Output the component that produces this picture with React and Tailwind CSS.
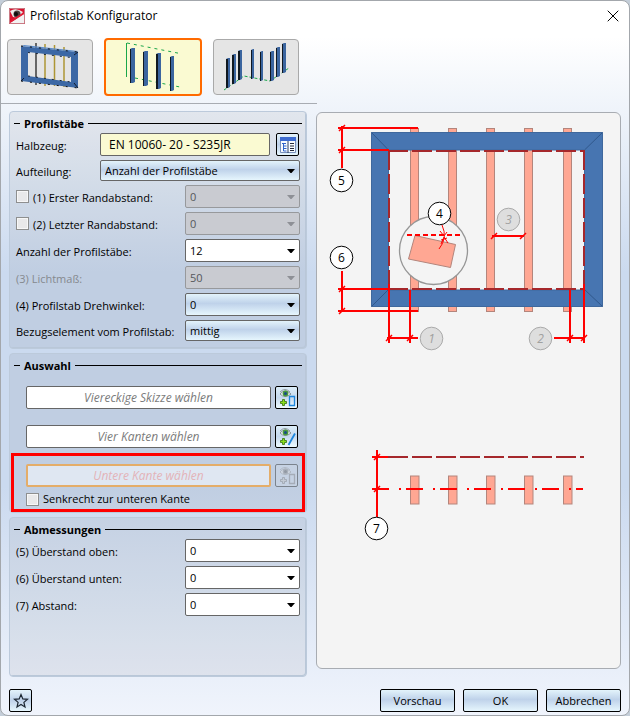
import React, { useState } from 'react';
import clsx from 'clsx';
import { X } from 'lucide-react';

const GLOSSY = 'bg-linear-to-b from-[#e3f3fb] via-[#bfd2ea] via-45% to-[#e6f6fd]';

const Select = ({ id, options, variant = 'plain', disabled, className }) => {
  const [value, setValue] = useState(options[0]);

  return (
    <div className={clsx('relative', className)}>
      <select
        id={id}
        value={value}
        disabled={disabled}
        onChange={(e) => setValue(e.target.value)}
        className={clsx(
          'block h-full w-full appearance-none rounded-xs border pr-5 pl-1 leading-4',
          disabled && 'border-[#97999c] bg-[#c9cbd1] text-[#55575b]',
          !disabled && 'border-[#666666] text-black',
          !disabled && (variant === 'glossy' ? GLOSSY : 'bg-white')
        )}
      >
        {options.map((option) => (
          <option key={option}>{option}</option>
        ))}
      </select>
      <svg
        viewBox="0 0 8 4"
        className={clsx(
          'pointer-events-none absolute top-1/2 right-[5px] h-1 w-2 -translate-y-1/2',
          disabled ? 'fill-[#8e9096]' : 'fill-black'
        )}
      >
        <path d="M0 0h8L4.500 4h-1z" />
      </svg>
    </div>
  );
};

const Checkbox = ({ id }) => (
  <input
    id={id}
    type="checkbox"
    className="size-[13px] shrink-0 appearance-none border border-[#8e8f8f] bg-[#e9e9ea] shadow-[inset_0_0_0_1px_#f7f7f7] checked:bg-[#3c6fb5]"
  />
);

const Group = ({ title, className, children }) => (
  <section className={clsx('rounded-sm border border-[#bccadb] bg-black/5 px-1.5 shadow-[inset_-1px_-1px_0_#b9c7d8]', className)}>
    <h2 className="-mx-0.5 flex h-[21px] items-center gap-1 pt-0.5 font-bold">
      <span className="h-px w-1.5 bg-black" />
      <span className="leading-4">{title}</span>
      <span className="h-px flex-1 bg-black" />
    </h2>
    {children}
  </section>
);

const Row = ({ id, label, checkbox, muted, height = 'h-[23px]', ...select }) => (
  <div className={clsx('flex items-center justify-between', height)}>
    <div className="flex items-center gap-1">
      {checkbox && <Checkbox id={`${id}-on`} />}
      <label htmlFor={id} className={clsx('pt-0.5 whitespace-nowrap', muted && 'text-[#85898e]')}>
        {label}
      </label>
    </div>
    <Select id={id} className="h-full w-[115px] shrink-0" {...select} />
  </div>
);

const PickIcon = ({ shape, disabled }) => (
  <svg viewBox="0 0 20 20" className={clsx('size-5', disabled && 'opacity-40 grayscale')}>
    <path d="M3 6Q8 0 14 6Q8 11 3 6Z" fill="#f4f8fa" stroke="#6f7778" strokeWidth=".8" />
    <path d="M3 4Q8-1 13 4" fill="none" stroke="#7d8486" strokeWidth=".8" />
    <circle cx="8.500" cy="5.500" r="2.900" fill="#4a9a3c" />
    <circle cx="8.500" cy="5.500" r="1.500" fill="#184b88" />
    <path d="M5.500 11.500h2v2h2v2h-2v2h-2v-2h-2v-2h2z" fill="#8be01c" stroke="#34720d" strokeWidth=".8" />
    {shape === 'rect' ? (
      <path d="M12.500 8.500h5v9h-5z" fill="none" stroke="#1e86dd" strokeWidth="1.300" />
    ) : (
      <path d="M18 6.500L11.500 18" stroke="#1e86dd" strokeWidth="1.800" />
    )}
  </svg>
);

const PickField = ({ text, shape, disabled }) => (
  <div className="flex h-[23px] gap-1 pr-0.5 pl-2.5">
    <input
      aria-label={text}
      placeholder={text}
      disabled={disabled}
      readOnly
      className={clsx(
        'min-w-0 flex-1 rounded-xs text-center text-xs italic',
        disabled
          ? 'border-2 border-[#e4ad69] bg-[#dfe7f2] placeholder:text-[#e3b3b8]'
          : 'border border-[#666666] bg-white placeholder:text-[#7b7b7b]'
      )}
    />
    <button
      aria-label={text}
      disabled={disabled}
      className={clsx(
        'flex size-[23px] items-center justify-center rounded-xs border',
        disabled ? 'border-[#7b838d] bg-[#c6d2e3]' : 'border-black bg-linear-to-b from-[#dcedf8] via-[#c5d8ed] to-[#eefaff]'
      )}
    >
      <PickIcon shape={shape} disabled={disabled} />
    </button>
  </div>
);

const AppIcon = () => (
  <svg viewBox="0 0 16 16" className="size-4">
    <path fill="#d9112e" d="M0 0h16v16H0z" />
    <path fill="#f2f2f2" d="M1 15L15 6v9z" />
    <path fill="#ece9e9" d="M1 3q6-4 13 1l-4 6-6-1z" />
    <circle cx="8" cy="6" r="3.500" fill="#4a3c3c" />
    <circle cx="7" cy="6" r="2" fill="#0d0d0d" />
    <path d="M1 14L15 5" stroke="#e11b35" strokeWidth="1.500" />
    <path d="M.5.5h15v15H.5z" fill="none" stroke="#c3a9ab" strokeWidth=".7" />
  </svg>
);

const FrameIcon = () => (
  <svg viewBox="7 39 86 56" className="h-14 w-[86px]">
    <path d="M36 43v42" stroke="#111" strokeWidth="1.200" />
    <path d="M45 44v42M54.500 45v41M64 47v40" stroke="#ad9634" strokeWidth="1.500" />
    <path d="M21 46L78 52V88L21 81Z M28 52V76L71 82V57Z" fill="#3c68a5" fillRule="evenodd" />
    <path d="M22 46l2-1 54 6-1 1z" fill="#5d8cc9" />
    <path d="M28 52.500l43 5M28 76l43 6" stroke="#16243a" strokeDasharray="2 6" />
    <path d="M21 46l57 6M21 81l57 7" stroke="#111" strokeDasharray="2 7" />
    <path d="M74 55l4-3M21 81l3-3M74 83l4 5" stroke="#111a2b" />
  </svg>
);

const Post = ({ x, y, w = 4, h, dark = 1 }) => (
  <g>
    <path d={`M${x} ${y + 1}l2-1h${w - 2}v${h - 1}l-2 1h${2 - w}z`} fill="#3b659f" />
    <path d={`M${x + dark / 2} ${y + 1}v${h - 1}`} stroke="#101820" strokeWidth={dark} />
  </g>
);

const RowIcon = () => (
  <svg viewBox="105 39 96 56" className="h-14 w-24">
    <path d="M126.500 77V43" stroke="#1aa64a" />
    <path d="M127 43l53 10.500" stroke="#1aa64a" strokeDasharray="3 4" />
    <path d="M135 78l45 9" stroke="#1aa64a" strokeDasharray="3 4" />
    <Post x={130} y={48} w={5} h={35} />
    <Post x={143} y={51} w={5} h={35} />
    <Post x={156} y={53} w={5} h={36} dark={2} />
    <Post x={170} y={56} h={35} />
  </svg>
);

const PathIcon = () => (
  <svg viewBox="213 39 86 56" className="h-14 w-[86px]">
    <path d="M224 90l20-14 26 5 19-13" fill="none" stroke="#1aa64a" strokeDasharray="3 2" />
    <Post x={226} y={58} h={30} dark={2} />
    <Post x={232} y={54} h={30} dark={2} />
    <Post x={238} y={50} h={30} dark={2} />
    <Post x={251} y={49} w={3} h={30} />
    <Post x={260} y={51} w={3} h={30} />
    <Post x={270} y={51} h={30} />
    <Post x={276} y={47} h={30} />
    <Post x={282} y={43} h={30} />
  </svg>
);

const MODES = [
  { id: 'frame', label: 'Rahmen', Icon: FrameIcon },
  { id: 'row', label: 'Kante', Icon: RowIcon },
  { id: 'path', label: 'Pfad', Icon: PathIcon },
];

const Badge = ({ x, y, n, muted }) => (
  <g>
    <circle cx={x} cy={y} r="11.300" fill={muted ? '#dedede' : '#fff'} stroke={muted ? '#a9a9a9' : '#000'} />
    <text
      x={x}
      y={y + 4.5}
      textAnchor="middle"
      fontSize="12"
      fontStyle={muted ? 'italic' : 'normal'}
      fill={muted ? '#a0a0a0' : '#000'}
    >
      {n}
    </text>
  </g>
);

const BARS = [410, 448, 486, 524, 563];

const Preview = () => (
  <svg viewBox="317 113 303 555" preserveAspectRatio="xMidYMin meet" className="block h-auto w-full">
    {/* bars and frame */}
    {BARS.map((x) => (
      <rect key={x} x={x + 0.5} y="128.500" width="8" height="183" fill="#ffa793" stroke="#b3857c" />
    ))}
    <path d="M371.500 132.500h231v174h-231z M388.500 150v140h196V150z" fill="#4775b1" stroke="#3f689d" fillRule="evenodd" />
    <path d="M371.500 132.500l17 17.500M602.500 132.500l-18 17.500M371.500 306.500l17-17M602.500 306.500l-18-17" stroke="#30588c" />
    <g fill="none" stroke="#a5272b" strokeWidth="2" strokeDasharray="20 4">
      <path d="M388 151h196M388 289h196M389 150v140M584 150v140" />
      <path d="M388 457h196" />
    </g>

    {/* rotation detail */}
    <circle cx="433.500" cy="250.500" r="34" fill="#f4f4f4" stroke="#969696" strokeWidth="1.300" />
    <path d="M415 235.500l40.500 9-5 23-42-8.500z" fill="#ffa793" stroke="#b3857c" />
    <path d="M407 235h56" stroke="red" strokeWidth="2" strokeDasharray="5 3" />
    <path d="M442 225Q448 238 439 249M440 231l4 5 3-4M441 244l3-7 4 6M441 240l6-2" fill="none" stroke="red" />

    {/* section view */}
    {BARS.map((x) => (
      <rect key={x} x={x + 0.5} y="476" width="8.500" height="28" fill="#ffa793" stroke="#b3857c" />
    ))}
    <path d="M372 489h211" stroke="red" strokeWidth="2" strokeDasharray="17 10 2 5" />

    {/* dimension lines */}
    <g fill="none" stroke="red" strokeWidth="2">
      <path d="M342 126v42M338 128h80M338 150h51" />
      <path d="M342 271v41M338 289h51M338 311h80" />
      <path d="M389 284v59M410 290v53M387 338h31" />
      <path d="M570 290v53M584 284v59M554 338h31" />
      <path d="M492 236h32" />
      <path d="M377 450v67M372 457h16M372 489h10" />
    </g>
    <g fill="none" stroke="red" strokeWidth="1.500">
      <path d="M339 131l6-6M339 153l6-6M339 292l6-6M339 314l6-6" />
      <path d="M386 341l6-6M407 341l6-6M567 341l6-6M581 341l6-6" />
      <path d="M374 460l6-6M374 492l6-6M491 239l6-6M520 239l6-6" />
    </g>

    <Badge x={431.5} y={338.5} n="1" muted />
    <Badge x={540.5} y={338.5} n="2" muted />
    <Badge x={508.5} y={219.5} n="3" muted />
    <Badge x={439.5} y={213.5} n="4" />
    <Badge x={341.5} y={180.5} n="5" />
    <Badge x={341.5} y={257.5} n="6" />
    <Badge x={376.5} y={528.5} n="7" />
  </svg>
);

const App = () => {
  const [mode, setMode] = useState('row');

  return (
    <div className="min-h-screen bg-[#c4ced9] font-['Open_Sans',sans-serif] text-[11px] leading-4 text-black">
      <div className="flex min-h-screen flex-col rounded-lg border border-[#a3a7ac] bg-[linear-gradient(to_bottom,#ffffff_5%,#cbdaef_38%,#cbdaef_68%,#f0f4fc)] px-2 pb-[3px]">
        <header className="flex h-[29px] items-center gap-1">
          <AppIcon />
          <h1 className="flex-1 pl-px text-xs">Profilstab Konfigurator</h1>
          <button aria-label="Schließen" className="-mr-0.5">
            <X className="size-5" strokeWidth={1.2} />
          </button>
        </header>

        <div className="-ml-2 flex h-[74px] w-[316px] items-center gap-[11px] border-b border-[#a8acb2] pl-1.5">
          {MODES.map(({ id, label, Icon }) => (
            <button
              key={id}
              aria-label={label}
              onClick={() => setMode(id)}
              className={clsx(
                'flex items-center justify-center overflow-hidden rounded-sm',
                mode === id
                  ? 'h-[58px] w-[98px] border-2 border-[#ff6a00] bg-[#fafad2]'
                  : 'h-14 w-[86px] border border-[#a9a9a9] bg-[#e5e5e5]'
              )}
            >
              <span className="shrink-0">
                <Icon />
              </span>
            </button>
          ))}
        </div>

        <main className="flex flex-1 gap-[9px] pt-[7px]">
          <div className="flex w-[298px] shrink-0 flex-col gap-1">
            <Group title="Profilstäbe" className="pb-[7px]">
              <div className="flex flex-col gap-1">
                <div className="flex h-[23px] items-center">
                  <label htmlFor="halbzeug" className="w-[84px] pt-0.5">
                    Halbzeug:
                  </label>
                  <input
                    id="halbzeug"
                    defaultValue="EN 10060- 20 - S235JR"
                    className="h-full min-w-0 flex-1 rounded-xs border border-[#666666] bg-[#fafad2] px-2 text-xs"
                  />
                  <button
                    aria-label="Katalog"
                    className="mr-px ml-1.5 flex size-[23px] items-center justify-center rounded-xs border border-black bg-linear-to-b from-[#e3f3fb] via-[#bfd2ea] to-[#e6f6fd]"
                  >
                    <svg viewBox="0 0 16 16" className="size-4">
                      <path d="M.5.500h15v15H.5z" fill="#f8fbff" stroke="#7991bd" />
                      <path d="M0 0h16v4H0z" fill="#3d6bd0" />
                      <path d="M8 4v12" stroke="#2d3f60" />
                      <path d="M2 6.500h4M3.500 9h3M3.500 11.500h3M3.500 14h3M3.500 6v8" stroke="#2e62c9" />
                      <path d="M10 6.500h4M10 9h4M10 11.500h4M10 13.500h4" stroke="#23283a" />
                    </svg>
                  </button>
                </div>
                <div className="flex h-[21px] items-center">
                  <label htmlFor="aufteilung" className="w-[84px] pt-0.5">
                    Aufteilung:
                  </label>
                  <Select id="aufteilung" variant="glossy" options={['Anzahl der Profilstäbe']} className="h-full flex-1" />
                </div>
                <Row id="rand-1" label="(1) Erster Randabstand:" checkbox disabled options={['0']} />
                <Row id="rand-2" label="(2) Letzter Randabstand:" checkbox disabled options={['0']} />
                <Row id="anzahl" label="Anzahl der Profilstäbe:" options={['12']} />
                <Row id="licht" label="(3) Lichtmaß:" muted disabled options={['50']} />
                <Row id="winkel" label="(4) Profilstab Drehwinkel:" variant="glossy" options={['0']} />
                <Row id="bezug" label="Bezugselement vom Profilstab:" variant="glossy" height="h-[21px]" options={['mittig']} />
              </div>
            </Group>

            <Group title="Auswahl">
              <div className="flex flex-col gap-4 pt-[11px]">
                <PickField text="Viereckige Skizze wählen" shape="rect" />
                <PickField text="Vier Kanten wählen" shape="line" />
              </div>
              <div className="-mx-[5px] mt-[5px] border-3 border-[#ff0000] px-0.5 pt-2 pb-0.5">
                <PickField text="Untere Kante wählen" shape="rect" disabled />
                <div className="mt-1 flex items-center gap-1 pl-2.5">
                  <Checkbox id="senkrecht" />
                  <label htmlFor="senkrecht">Senkrecht zur unteren Kante</label>
                </div>
              </div>
            </Group>

            <Group title="Abmessungen" className="flex-1">
              <div className="flex flex-col gap-1">
                <Row id="oben" label="(5) Überstand oben:" options={['0']} />
                <Row id="unten" label="(6) Überstand unten:" options={['0']} />
                <Row id="abstand" label="(7) Abstand:" options={['0']} />
              </div>
            </Group>
          </div>

          <div className="mt-px mb-2 min-w-0 flex-1 rounded-md border border-[#a8acb2] bg-[#f4f4f4]">
            <Preview />
          </div>
        </main>

        <footer className="mt-3 flex items-center gap-2">
          <button
            aria-label="Favorit"
            className="mr-auto flex size-[23px] items-center justify-center rounded-xs border border-black bg-linear-to-b from-[#e3f3fb] via-[#bfd2ea] to-[#e6f6fd]"
          >
            <svg viewBox="0 0 16 16" className="size-4">
              <path d="M8 1.500l1.800 4.400 4.700.4-3.600 3.100 1.100 4.600L8 11.500 4 14l1.100-4.600L1.500 6.300l4.700-.4z" fill="none" stroke="#1c2733" strokeWidth="1.200" />
            </svg>
          </button>
          {['Vorschau', 'OK', 'Abbrechen'].map((label) => (
            <button key={label} className={clsx('h-[23px] w-[75px] rounded-xs border border-black', GLOSSY)}>
              {label}
            </button>
          ))}
        </footer>
      </div>
    </div>
  );
};

export default App;
